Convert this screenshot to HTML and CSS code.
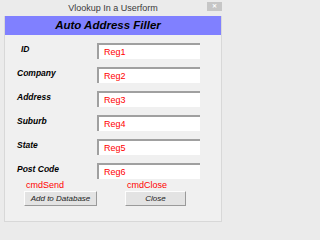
FILE: index.html
```html
<!DOCTYPE html>
<html>
<head>
<meta charset="utf-8">
<link rel="stylesheet" href="styles.css">
</head>
<body>
<div class="window">
  <div class="titlebar">
    <span class="spacer"></span>
    <span class="title">Vlookup In a Userform</span>
    <span class="close">&#x2715;</span>
  </div>
  <div class="client">
    <div class="header">Auto Address Filler</div>
    <div class="form">
      <div class="row"><span class="label label-id">ID</span><div class="box">Reg1</div></div>
      <div class="row"><span class="label">Company</span><div class="box">Reg2</div></div>
      <div class="row"><span class="label">Address</span><div class="box">Reg3</div></div>
      <div class="row"><span class="label">Suburb</span><div class="box">Reg4</div></div>
      <div class="row"><span class="label">State</span><div class="box">Reg5</div></div>
      <div class="row"><span class="label">Post Code</span><div class="box">Reg6</div></div>
    </div>
    <div class="commands">
      <div class="cmd cmd-send">
        <span class="cmd-name">cmdSend</span>
        <div class="btn">Add to Database</div>
      </div>
      <div class="cmd cmd-close">
        <span class="cmd-name">cmdClose</span>
        <div class="btn">Close</div>
      </div>
    </div>
  </div>
</div>
</body>
</html>
```
FILE: styles.css
```css
html, body {
  margin: 0;
  padding: 0;
}
body {
  width: 226px;
  height: 224px;
  background: #ebebeb;
  font-family: "Liberation Sans", Arial, sans-serif;
  overflow: hidden;
}
.window {
  width: 226px;
  height: 224px;
  display: flex;
  flex-direction: column;
}
.titlebar {
  height: 16px;
  display: grid;
  grid-template-columns: 1fr auto 1fr;
  align-items: start;
}
.title {
  font-size: 9px;
  line-height: 14px;
  color: #3a3a3a;
  padding-top: 1px;
}
.close {
  justify-self: end;
  width: 15px;
  height: 9px;
  margin-top: 2px;
  margin-right: 4px;
  background: #c6c6c6;
  color: #ffffff;
  font-size: 6px;
  line-height: 9px;
  text-align: center;
  font-weight: bold;
}
.client {
  margin-left: 4px;
  width: 216px;
  height: 205px;
  background: #f0f0f0;
  border: 1px solid #d8d8d8;
  border-top: none;
  display: flex;
  flex-direction: column;
}
.header {
  height: 19px;
  background: #8080ff;
  color: #000;
  font-weight: bold;
  font-style: italic;
  font-size: 11.5px;
  line-height: 19px;
  text-align: center;
  padding-right: 10px;
}
.form {
  display: flex;
  flex-direction: column;
  gap: 8px;
  padding-top: 8px;
  padding-left: 12px;
}
.row {
  display: grid;
  grid-template-columns: 80px 103px;
  align-items: start;
}
.label {
  font-size: 8.5px;
  line-height: 10px;
  font-weight: bold;
  font-style: italic;
  color: #000;
  padding-top: 1px;
}
.label-id {
  padding-left: 4px;
}
.box {
  height: 14px;
  background: #fff;
  border-top: 2px solid #a0a0a0;
  border-left: 2px solid #a0a0a0;
  color: #ff0000;
  font-size: 9px;
  line-height: 15px;
  padding-left: 5px;
}
.commands {
  display: flex;
  padding-left: 19px;
  gap: 28px;
}
.cmd {
  display: flex;
  flex-direction: column;
}
.cmd-send {
  width: 73px;
}
.cmd-close {
  width: 61px;
}
.cmd-name {
  color: #ff0000;
  font-size: 9px;
  line-height: 11px;
  height: 11px;
  padding-left: 2px;
  padding-top: 1px;
}
.btn {
  height: 13px;
  background: #e3e3e3;
  border-top: 1px solid #fdfdfd;
  border-left: 1px solid #fdfdfd;
  border-right: 1px solid #9a9a9a;
  border-bottom: 1px solid #9a9a9a;
  font-size: 8px;
  line-height: 14px;
  font-style: italic;
  color: #222;
  text-align: center;
}
```
